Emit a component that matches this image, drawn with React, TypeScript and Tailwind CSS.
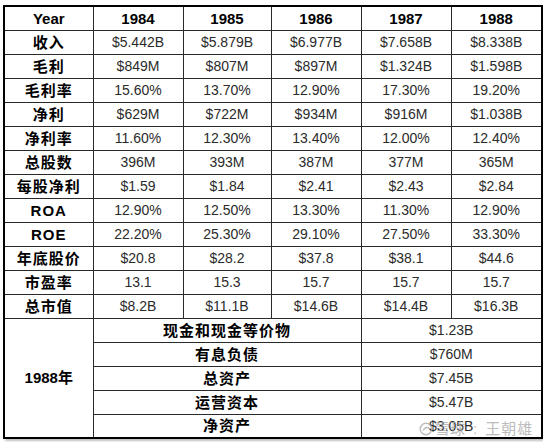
import React from "react";

const years = ["1984", "1985", "1986", "1987", "1988"];

const rows: { label: string; vals: string[] }[] = [
  { label: "收入", vals: ["$5.442B", "$5.879B", "$6.977B", "$7.658B", "$8.338B"] },
  { label: "毛利", vals: ["$849M", "$807M", "$897M", "$1.324B", "$1.598B"] },
  { label: "毛利率", vals: ["15.60%", "13.70%", "12.90%", "17.30%", "19.20%"] },
  { label: "净利", vals: ["$629M", "$722M", "$934M", "$916M", "$1.038B"] },
  { label: "净利率", vals: ["11.60%", "12.30%", "13.40%", "12.00%", "12.40%"] },
  { label: "总股数", vals: ["396M", "393M", "387M", "377M", "365M"] },
  { label: "每股净利", vals: ["$1.59", "$1.84", "$2.41", "$2.43", "$2.84"] },
  { label: "ROA", vals: ["12.90%", "12.50%", "13.30%", "11.30%", "12.90%"] },
  { label: "ROE", vals: ["22.20%", "25.30%", "29.10%", "27.50%", "33.30%"] },
  { label: "年底股价", vals: ["$20.8", "$28.2", "$37.8", "$38.1", "$44.6"] },
  { label: "市盈率", vals: ["13.1", "15.3", "15.7", "15.7", "15.7"] },
  { label: "总市值", vals: ["$8.2B", "$11.1B", "$14.6B", "$14.4B", "$16.3B"] },
];

const bottom: { label: string; val: string }[] = [
  { label: "现金和现金等价物", val: "$1.23B" },
  { label: "有息负债", val: "$760M" },
  { label: "总资产", val: "$7.45B" },
  { label: "运营资本", val: "$5.47B" },
  { label: "净资产", val: "$3.05B" },
];

const cell = "border border-[#2a2a2a] h-[24px] p-0 text-center align-middle";
const lab = `${cell} font-bold text-[15px] text-black`;
const num = `${cell} text-[14px] text-[#2b2b2b]`;

export default function App() {
  return (
    <div
      className="w-[543px] h-[442px] bg-white pt-[5px] pl-[3px] overflow-hidden"
      style={{ fontFamily: '"Liberation Sans", "Noto Sans CJK SC", sans-serif' }}
    >
      <div className="relative w-[538px] shadow-[2px_2px_2px_rgba(0,0,0,0.25)]">
        <table className="w-[538px] table-fixed border-collapse border-2 border-black leading-none">
          <colgroup>
            <col className="w-[89px]" />
            <col className="w-[90px]" />
            <col className="w-[88px]" />
            <col className="w-[90px]" />
            <col className="w-[90px]" />
            <col className="w-[91px]" />
          </colgroup>
          <tbody>
            <tr>
              <td className={lab}>Year</td>
              {years.map((y) => (
                <td key={y} className={lab}>
                  {y}
                </td>
              ))}
            </tr>
            {rows.map((r) => (
              <tr key={r.label}>
                <td className={`${lab} tracking-[1px]`}>{r.label}</td>
                {r.vals.map((v, i) => (
                  <td key={i} className={num}>
                    {v}
                  </td>
                ))}
              </tr>
            ))}
            {bottom.map((b, i) => (
              <tr key={b.label}>
                {i === 0 && (
                  <td rowSpan={5} className={`${lab}`}>
                    1988年
                  </td>
                )}
                <td colSpan={3} className={`${lab} tracking-[1px]`}>
                  {b.label}
                </td>
                <td colSpan={2} className={num}>
                  {b.val}
                </td>
              </tr>
            ))}
          </tbody>
        </table>
        <div className="absolute left-[416px] top-[413px] flex items-center text-[15px] text-[#a0a0a0] opacity-70 pointer-events-none">
          <svg width="14" height="14" viewBox="0 0 14 14" fill="none" stroke="#a0a0a0" strokeWidth="1.4">
            <circle cx="7" cy="7" r="5.8" />
            <path d="M4 8.5c1.5-2.5 4-3.5 6-2.5" />
          </svg>
          <span className="ml-[2px]">雪球</span>
          <span className="ml-[8px]">:</span>
          <span className="ml-[8px] tracking-[1px]">王朝雄</span>
        </div>
      </div>
    </div>
  );
}
